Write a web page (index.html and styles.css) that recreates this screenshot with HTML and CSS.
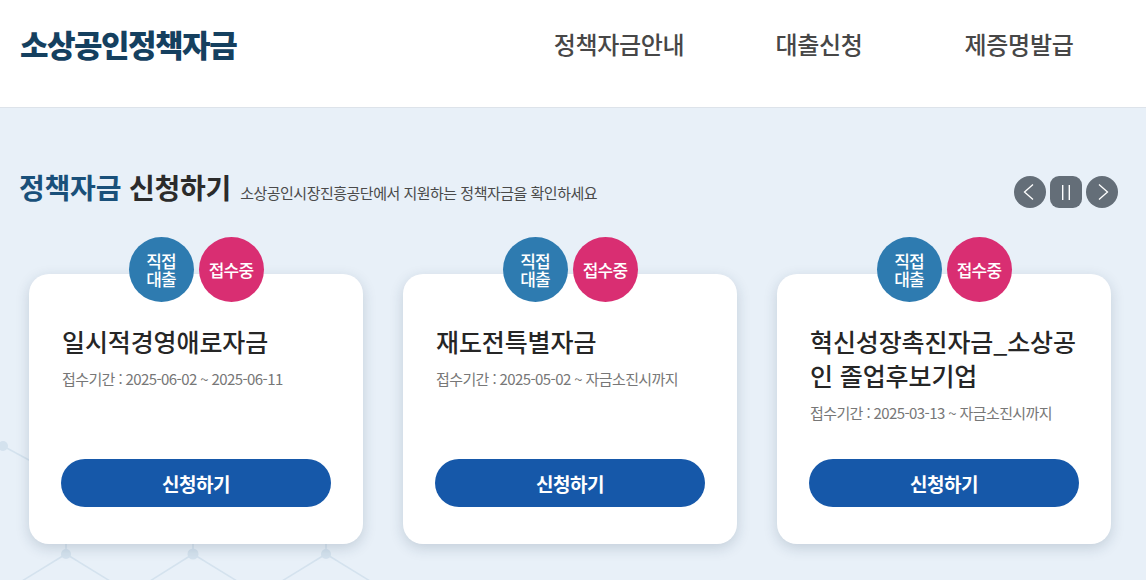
FILE: index.html
```html
<!DOCTYPE html>
<html lang="ko">
<head>
<meta charset="utf-8">
<title>소상공인정책자금</title>
<link rel="stylesheet" href="styles.css">
</head>
<body>
<header class="header">
  <div class="logo">소상공인정책자금</div>
  <nav class="nav">
    <a class="nav-item">정책자금안내</a>
    <a class="nav-item">대출신청</a>
    <a class="nav-item">제증명발급</a>
  </nav>
</header>
<main class="main">
  <svg class="bg-net" width="1146" height="472" viewBox="0 108 1146 472" aria-hidden="true">
    <g stroke="#d4e2ee" stroke-width="1.5" fill="none">
      <line x1="3" y1="446" x2="40" y2="466"/>
      <line x1="66" y1="540" x2="66" y2="554"/>
      <line x1="66" y1="554" x2="22" y2="581"/>
      <line x1="66" y1="554" x2="110" y2="581"/>
      <line x1="193" y1="540" x2="193" y2="554"/>
      <line x1="193" y1="554" x2="150" y2="581"/>
      <line x1="193" y1="554" x2="237" y2="581"/>
      <line x1="326" y1="540" x2="326" y2="554"/>
      <line x1="326" y1="554" x2="282" y2="581"/>
      <line x1="326" y1="554" x2="370" y2="581"/>
    </g>
    <g fill="#d4e2ee">
      <circle cx="3" cy="446" r="5"/>
      <circle cx="66" cy="554" r="5"/>
      <circle cx="193" cy="554" r="5.5"/>
      <circle cx="326" cy="554" r="5"/>
    </g>
  </svg>
  <div class="section-head">
    <h2 class="section-title"><span class="accent">정책자금</span> 신청하기<span class="section-sub">소상공인시장진흥공단에서 지원하는 정책자금을 확인하세요</span></h2>
    <div class="controls">
      <button class="ctrl ctrl-round" aria-label="이전">
        <svg width="32" height="32" viewBox="0 0 32 32"><polyline points="19,8.5 10.5,16 19,23.5" fill="none" stroke="#fff" stroke-width="1.3"/></svg>
      </button>
      <button class="ctrl ctrl-square" aria-label="정지">
        <svg width="32" height="32" viewBox="0 0 32 32"><rect x="12" y="9" width="1.4" height="15" fill="#fff"/><rect x="18.6" y="9" width="1.4" height="15" fill="#fff"/></svg>
      </button>
      <button class="ctrl ctrl-round" aria-label="다음">
        <svg width="32" height="32" viewBox="0 0 32 32"><polyline points="13,8.5 21.5,16 13,23.5" fill="none" stroke="#fff" stroke-width="1.3"/></svg>
      </button>
    </div>
  </div>
  <div class="cards">
    <div class="card">
      <div class="badges">
        <span class="badge badge-blue">직접<br>대출</span>
        <span class="badge badge-pink">접수중</span>
      </div>
      <h3 class="card-title">일시적경영애로자금</h3>
      <p class="card-date">접수기간 : 2025-06-02 ~ 2025-06-11</p>
      <a class="card-btn">신청하기</a>
    </div>
    <div class="card">
      <div class="badges">
        <span class="badge badge-blue">직접<br>대출</span>
        <span class="badge badge-pink">접수중</span>
      </div>
      <h3 class="card-title">재도전특별자금</h3>
      <p class="card-date">접수기간 : 2025-05-02 ~ 자금소진시까지</p>
      <a class="card-btn">신청하기</a>
    </div>
    <div class="card">
      <div class="badges">
        <span class="badge badge-blue">직접<br>대출</span>
        <span class="badge badge-pink">접수중</span>
      </div>
      <h3 class="card-title">혁신성장촉진자금_소상공인 졸업후보기업</h3>
      <p class="card-date">접수기간 : 2025-03-13 ~ 자금소진시까지</p>
      <a class="card-btn">신청하기</a>
    </div>
  </div>
</main>
</body>
</html>
```
FILE: styles.css
```css
* { box-sizing: border-box; }
html, body { margin: 0; padding: 0; }
body {
  width: 1146px;
  height: 580px;
  overflow: hidden;
  font-family: "Noto Sans CJK KR", "Noto Sans", sans-serif;
  background: #e8f0f8;
}
.header {
  height: 108px;
  background: #fff;
  border-bottom: 1px solid #dde3ea;
  display: flex;
  align-items: center;
  padding: 0 27px 20px 20px;
}
.logo {
  font-size: 31px;
  font-weight: 900;
  color: #15405f;
  letter-spacing: -1.5px;
  line-height: 1;
}
.nav {
  margin-left: auto;
  display: flex;
}
.nav-item {
  width: 200px;
  text-align: center;
  font-size: 24px;
  line-height: 1;
  font-weight: 500;
  color: #474747;
  letter-spacing: -0.3px;
}
.main {
  position: relative;
  height: 472px;
}
.bg-net {
  position: absolute;
  left: 0;
  top: 0;
}
.section-head {
  position: relative;
  display: flex;
  align-items: center;
  justify-content: space-between;
  padding: 61px 28px 0 19px;
}
.section-title {
  margin: 0;
  font-size: 28px;
  line-height: 36px;
  font-weight: 700;
  color: #2b2b2b;
  letter-spacing: -0.2px;
}
.accent { color: #19507a; }
.section-sub {
  font-size: 15px;
  font-weight: 400;
  color: #4a4a4a;
  letter-spacing: -0.5px;
  margin-left: 9px;
}
.controls {
  display: flex;
  gap: 4px;
  margin-top: 4px;
}
.ctrl {
  width: 32px;
  height: 32px;
  padding: 0;
  border: 0;
  background: #646e78;
  display: block;
}
.ctrl svg { display: block; }
.ctrl-round { border-radius: 50%; }
.ctrl-square { border-radius: 9px; }
.cards {
  position: relative;
  display: flex;
  gap: 40px;
  padding: 0 0 0 29px;
  margin-top: 63px;
}
.card {
  position: relative;
  width: 334px;
  height: 270px;
  background: #fff;
  border-radius: 20px;
  box-shadow: 0 4px 14px rgba(30, 55, 85, 0.18);
  padding: 50px 32px 37px 32px;
  display: flex;
  flex-direction: column;
}
.badges {
  position: absolute;
  top: -37px;
  left: 0;
  right: 0;
  display: flex;
  justify-content: center;
  gap: 5px;
}
.badge {
  width: 65px;
  height: 65px;
  border-radius: 50%;
  display: flex;
  align-items: center;
  justify-content: center;
  text-align: center;
  color: #fff;
  font-size: 17px;
  line-height: 18px;
  font-weight: 500;
  letter-spacing: -0.8px;
}
.badge-blue { background: #2e7bb0; }
.badge-pink { background: #d92e72; }
.card-title {
  margin: 0;
  padding-left: 1px;
  font-size: 25px;
  line-height: 34px;
  font-weight: 500;
  color: #262626;
  letter-spacing: -0.1px;
}
.card-date {
  margin: 11px 0 0 1px;
  font-size: 15px;
  line-height: 20px;
  color: #777;
  letter-spacing: -0.6px;
}
.card-btn {
  margin-top: auto;
  height: 48px;
  border-radius: 24px;
  background: #1658a9;
  color: #fff;
  display: flex;
  align-items: center;
  justify-content: center;
  font-size: 19px;
  font-weight: 700;
  letter-spacing: -0.5px;
}
```
